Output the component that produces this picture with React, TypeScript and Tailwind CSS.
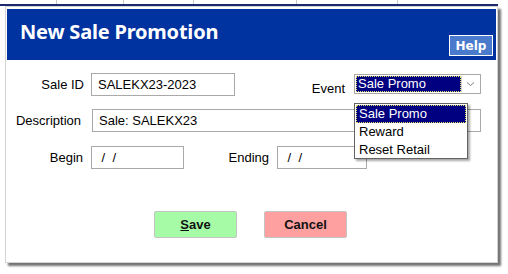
export default function App() {
  const field = "h-[23px] border border-[#a9a9a9] bg-white pl-[6px] flex items-center text-[13px] text-black";
  const label = "text-right text-[13px] text-black";

  return (
    <div className="w-[508px] h-[274px] bg-white overflow-hidden font-['Liberation_Sans',Arial,sans-serif]">
      {/* strip from the window behind */}
      <div className="h-[4px] flex">
        <div className="w-[57px] border-r border-[#c8c8c8]" />
        <div className="w-[67px] border-r border-[#c8c8c8]" />
        <div className="w-[70px] border-r border-[#c8c8c8]" />
        <div className="w-[103px] border-r border-[#c8c8c8]" />
        <div className="w-[101px] border-r border-[#c8c8c8]" />
      </div>
      <div className="h-[2px] w-[498px] bg-[#1c2a6e]" />

      <div className="ml-[5px] w-[493px] h-[257px] border border-[#d4d4d4] pt-[2px] px-[1px] bg-white shadow-[3px_3px_2px_rgba(0,0,0,0.55)]">
        <div className="h-[51px] bg-[#0033a0] flex items-start justify-between pl-[13px] pr-[3px]">
          <div className="mt-[8px] text-white text-[20px] font-bold font-['Noto_Sans',sans-serif] tracking-[-0.2px]">
            New Sale Promotion
          </div>
          <div className="mt-[26px] w-[44px] h-[21px] border border-white bg-[#4a7acb] flex items-center justify-center text-white text-[12px] font-bold font-['DejaVu_Sans',sans-serif]">
            Help
          </div>
        </div>

        {/* Sale ID / Event */}
        <div className="mt-[13px] h-[23px] flex items-start">
          <div className={`w-[77px] h-[23px] leading-[23px] ${label}`}>Sale ID</div>
          <div className={`ml-[7px] w-[144px] ${field}`}>SALEKX23-2023</div>
          <div className={`w-[110px] mt-[4px] h-[23px] leading-[23px] ${label}`}>Event</div>
          <div className="relative ml-[9px] mt-[1px]">
            <div className="w-[127px] h-[20px] border border-[#a9a9a9] bg-white flex p-[1px]">
              <div className="flex-1 bg-[#000080] outline-1 outline-dotted outline-[#e8d860] -outline-offset-1 text-white text-[13px] leading-[16px] pl-[2px]">
                Sale Promo
              </div>
              <div className="w-[18px] border-l border-[#d0d0d0] flex items-center justify-center">
                <svg width="9" height="6" viewBox="0 0 9 6">
                  <path d="M1 1.5 L4.5 4.5 L8 1.5" fill="none" stroke="#808080" strokeWidth="1" />
                </svg>
              </div>
            </div>
            <div className="absolute left-0 top-[29px] w-[114px] h-[56px] border border-[#646464] bg-white shadow-[2px_2px_2px_rgba(0,0,0,0.35)] z-10 p-[1px] text-[13px] text-black leading-[18px]">
              <div className="bg-[#000080] text-white pl-[3px] outline-1 outline-dotted outline-[#e8d860] -outline-offset-1">Sale Promo</div>
              <div className="pl-[3px]">Reward</div>
              <div className="pl-[3px]">Reset Retail</div>
            </div>
          </div>
        </div>

        {/* Description */}
        <div className="mt-[13px] flex items-start">
          <div className={`w-[74px] h-[23px] leading-[23px] ${label}`}>Description</div>
          <div className={`ml-[11px] w-[389px] ${field}`}>Sale: SALEKX23</div>
        </div>

        {/* Begin / Ending */}
        <div className="mt-[14px] flex items-start">
          <div className={`w-[76px] h-[23px] leading-[23px] ${label}`}>Begin</div>
          <div className={`ml-[8px] w-[93px] ${field} text-[#1a1a70]`}>&nbsp;/&nbsp;&nbsp;/</div>
          <div className={`w-[85px] h-[23px] leading-[23px] ${label}`}>Ending</div>
          <div className={`ml-[8px] w-[90px] ${field} text-[#1a1a70]`}>&nbsp;/&nbsp;&nbsp;/</div>
        </div>

        {/* Buttons */}
        <div className="mt-[42px] flex ml-[147px] gap-[27px]">
          <button className="w-[83px] h-[27px] rounded-[2px] border border-[#c4c4c4] bg-[#a6fca6] text-[13px] font-bold text-[#111]">
            <span className="underline">S</span>ave
          </button>
          <button className="w-[83px] h-[27px] rounded-[2px] border border-[#c4c4c4] bg-[#ffa0a0] text-[13px] font-bold text-[#111]">
            Cancel
          </button>
        </div>
      </div>
    </div>
  );
}
